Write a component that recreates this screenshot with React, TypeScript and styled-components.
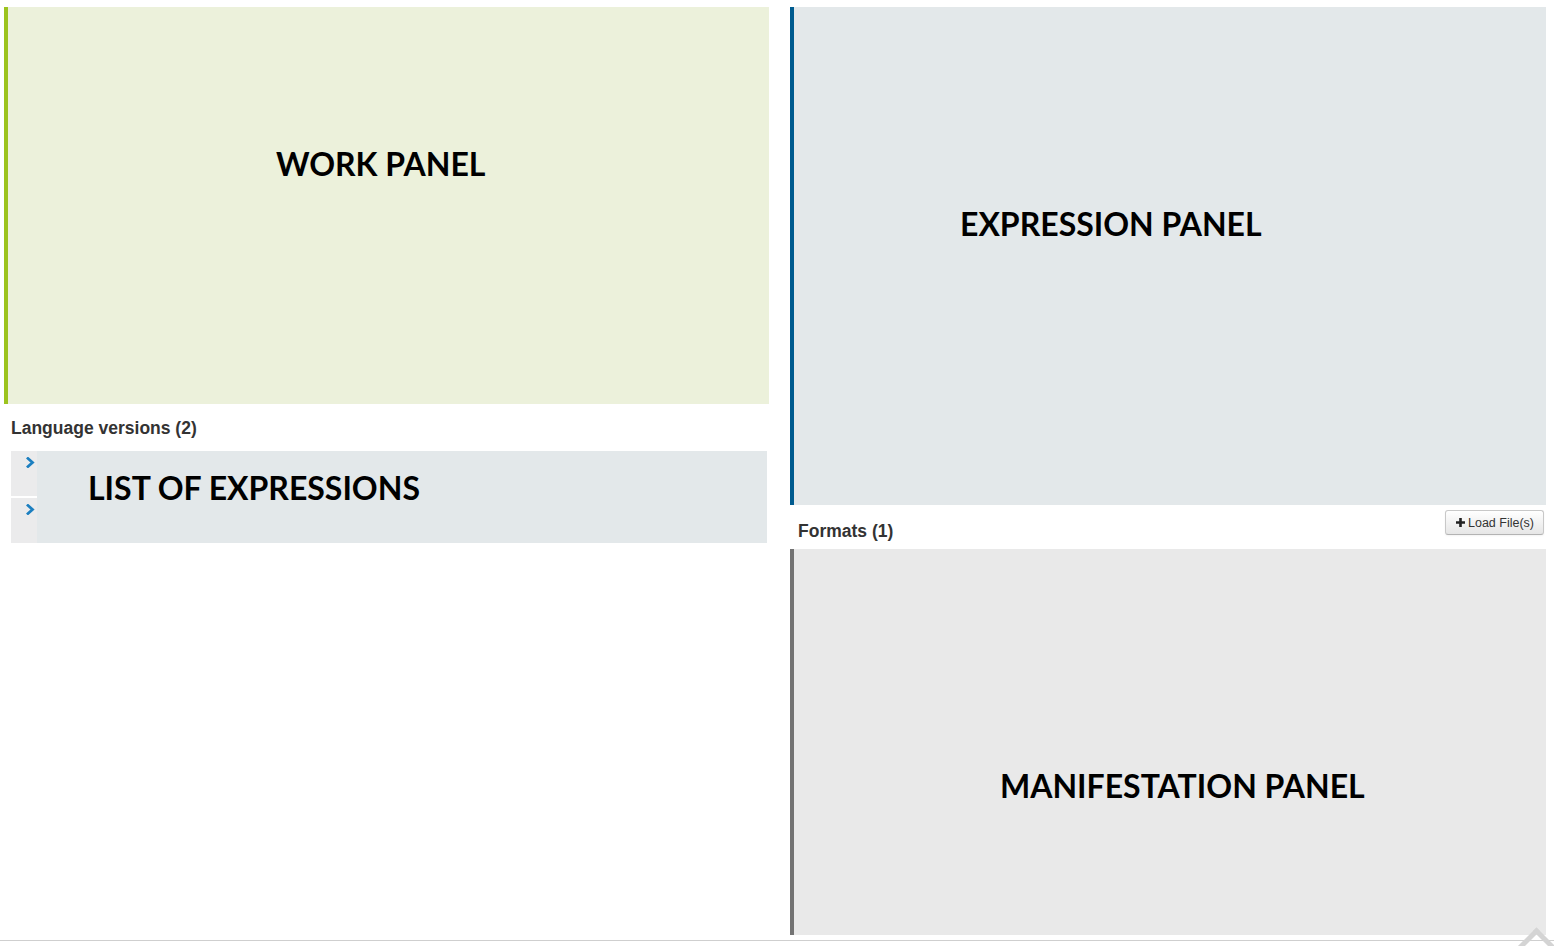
import React from "react";
import styled, { createGlobalStyle } from "styled-components";

const GlobalStyle = createGlobalStyle`
  html, body {
    margin: 0;
    padding: 0;
    background: #ffffff;
    overflow: hidden;
  }
  body {
    font-family: "Liberation Sans", Arial, sans-serif;
    color: #333333;
  }
`;

const Chevron = () => (
  <svg width="9" height="11" viewBox="0 0 9 11">
    <polyline points="2,1.5 6.5,5.5 2,9.5" fill="none" stroke="#1c7fc0" strokeWidth="2.8" strokeLinecap="square" />
  </svg>
);

const PlusIcon = () => (
  <svg width="9" height="9" viewBox="0 0 9 9">
    <path d="M3.2 0h2.6v3.2H9v2.6H5.8V9H3.2V5.8H0V3.2h3.2z" fill="#222222" />
  </svg>
);

function App() {
  const expressions = ["fr", "en"];

  return (
    <>
      <GlobalStyle />
      <S.Page>
        <S.Columns>
          <S.LeftColumn>
            <S.Panel $bg="#ecf1db" $accent="#9cc31e" $height={397}>
              <S.PanelLabel $top={135} $left={268}>WORK PANEL</S.PanelLabel>
            </S.Panel>
            <S.SectionTitle>Language versions (2)</S.SectionTitle>
            <S.List>
              <S.Toggles>
                {expressions.map((lang) => (
                  <S.Toggle key={lang}>
                    <Chevron />
                  </S.Toggle>
                ))}
              </S.Toggles>
              <S.ListBody>
                <S.PanelLabel $top={15} $left={51}>LIST OF EXPRESSIONS</S.PanelLabel>
              </S.ListBody>
            </S.List>
          </S.LeftColumn>

          <S.RightColumn>
            <S.Panel $bg="#e3e8ea" $accent="#005b8f" $height={498}>
              <S.PanelLabel $top={195} $left={166}>EXPRESSION PANEL</S.PanelLabel>
            </S.Panel>
            <S.FormatsBar>
              <S.FormatsTitle>Formats (1)</S.FormatsTitle>
              <S.LoadButton>
                <PlusIcon />
                Load File(s)
              </S.LoadButton>
            </S.FormatsBar>
            <S.Panel $bg="#e9e9e9" $accent="#737373" $height={386}>
              <S.PanelLabel $top={215} $left={206}>MANIFESTATION PANEL</S.PanelLabel>
            </S.Panel>
          </S.RightColumn>
        </S.Columns>
        <S.Footer />
        <S.ScrollTop />
      </S.Page>
    </>
  );
}

const S = {
  Page: styled.div`
    position: relative;
    width: 1554px;
    height: 946px;
    overflow: hidden;
    padding-top: 7px;
    box-sizing: border-box;
  `,

  Columns: styled.div`
    display: flex;
    gap: 21px;
    padding-left: 4px;
    padding-right: 8px;
  `,

  LeftColumn: styled.div`
    width: 765px;
    display: flex;
    flex-direction: column;
  `,

  RightColumn: styled.div`
    flex: 1;
    display: flex;
    flex-direction: column;
  `,

  Panel: styled.div<{ $bg: string; $accent: string; $height: number }>`
    height: ${(p) => p.$height}px;
    background: ${(p) => p.$bg};
    border-left: 4px solid ${(p) => p.$accent};
    box-sizing: border-box;
  `,

  PanelLabel: styled.div<{ $top: number; $left: number }>`
    padding-top: ${(p) => p.$top}px;
    padding-left: ${(p) => p.$left}px;
    font-family: Lato, "Open Sans", sans-serif;
    font-weight: 700;
    font-size: 32px;
    line-height: 44px;
    color: #000000;
    white-space: nowrap;
  `,

  SectionTitle: styled.div`
    margin: 14px 0 0 7px;
    height: 33px;
    font-size: 17.5px;
    font-weight: 700;
    line-height: 20px;
    color: #333333;
  `,

  List: styled.div`
    margin-left: 7px;
    width: 756px;
    height: 92px;
    display: flex;
    background: #e3e8ea;
  `,

  Toggles: styled.div`
    width: 26px;
    display: flex;
    flex-direction: column;
    gap: 2px;
    background: #ffffff;
  `,

  Toggle: styled.div`
    flex: 1;
    background: #ebebec;
    padding: 3px 0 0 15px;
    box-sizing: border-box;
  `,

  ListBody: styled.div`
    flex: 1;
  `,

  FormatsBar: styled.div`
    height: 44px;
    display: flex;
    align-items: flex-start;
    justify-content: space-between;
    padding: 5px 2px 0 8px;
    box-sizing: border-box;
  `,

  FormatsTitle: styled.div`
    margin-top: 11px;
    font-size: 17.5px;
    font-weight: 700;
    line-height: 20px;
    color: #333333;
  `,

  LoadButton: styled.button`
    height: 25px;
    width: 99px;
    padding: 0 0 0 10px;
    display: flex;
    align-items: center;
    gap: 3px;
    font-family: "Liberation Sans", Arial, sans-serif;
    font-size: 12.5px;
    color: #333333;
    background: linear-gradient(#ffffff, #e6e6e6);
    border: 1px solid #c8c8c8;
    border-bottom-color: #b3b3b3;
    border-radius: 3px;
    box-shadow: 0 1px 2px rgba(0, 0, 0, 0.05);
  `,

  Footer: styled.div`
    margin-top: 5px;
    border-top: 1px solid #cfcfcf;
  `,

  ScrollTop: styled.div`
    position: absolute;
    right: 4px;
    bottom: -14px;
    width: 22px;
    height: 22px;
    border-top: 5px solid #d4d4d4;
    border-left: 5px solid #d4d4d4;
    transform: rotate(45deg);
  `,
};

export default App;
